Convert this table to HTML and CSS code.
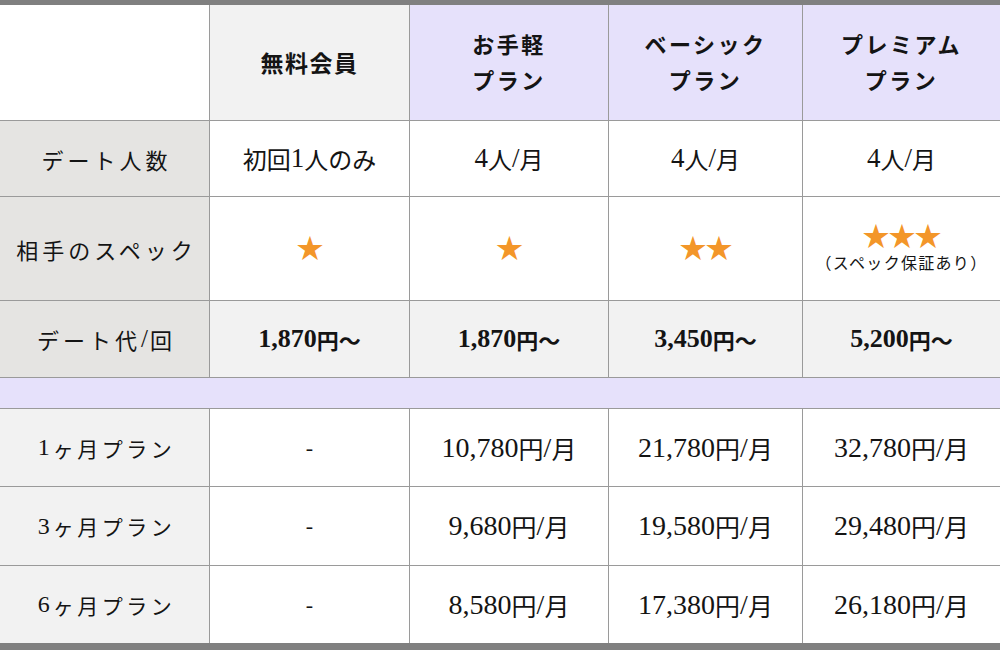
FILE: index.html
```html
<!DOCTYPE html>
<html lang="ja">
<head>
<meta charset="utf-8">
<link rel="stylesheet" href="styles.css">
</head>
<body>
<div class="table">
  <div class="cell corner"></div>
  <div class="cell head free">無料会員</div>
  <div class="cell head plan">お手軽<br>プラン</div>
  <div class="cell head plan">ベーシック<br>プラン</div>
  <div class="cell head plan">プレミアム<br>プラン</div>

  <div class="cell label dark">デート人数</div>
  <div class="cell val cnt">初回<span class="num">1</span>人のみ</div>
  <div class="cell val cnt"><span class="num">4</span>人<span class="num">/</span>月</div>
  <div class="cell val cnt"><span class="num">4</span>人<span class="num">/</span>月</div>
  <div class="cell val cnt"><span class="num">4</span>人<span class="num">/</span>月</div>

  <div class="cell label dark">相手のスペック</div>
  <div class="cell val"><span class="stars">★</span></div>
  <div class="cell val"><span class="stars">★</span></div>
  <div class="cell val"><span class="stars">★★</span></div>
  <div class="cell val col"><span class="stars">★★★</span><span class="note">（スペック保証あり）</span></div>

  <div class="cell label dark">デート代<span class="num">/</span>回</div>
  <div class="cell val grey price"><span class="num">1,870</span>円～</div>
  <div class="cell val grey price"><span class="num">1,870</span>円～</div>
  <div class="cell val grey price"><span class="num">3,450</span>円～</div>
  <div class="cell val grey price"><span class="num">5,200</span>円～</div>

  <div class="spacer"></div>

  <div class="cell label light"><span class="num">1</span>ヶ月プラン</div>
  <div class="cell val dash">-</div>
  <div class="cell val fee"><span class="num">10,780</span>円<span class="num">/</span>月</div>
  <div class="cell val fee"><span class="num">21,780</span>円<span class="num">/</span>月</div>
  <div class="cell val fee"><span class="num">32,780</span>円<span class="num">/</span>月</div>

  <div class="cell label light"><span class="num">3</span>ヶ月プラン</div>
  <div class="cell val dash">-</div>
  <div class="cell val fee"><span class="num">9,680</span>円<span class="num">/</span>月</div>
  <div class="cell val fee"><span class="num">19,580</span>円<span class="num">/</span>月</div>
  <div class="cell val fee"><span class="num">29,480</span>円<span class="num">/</span>月</div>

  <div class="cell label light"><span class="num">6</span>ヶ月プラン</div>
  <div class="cell val dash">-</div>
  <div class="cell val fee"><span class="num">8,580</span>円<span class="num">/</span>月</div>
  <div class="cell val fee"><span class="num">17,380</span>円<span class="num">/</span>月</div>
  <div class="cell val fee"><span class="num">26,180</span>円<span class="num">/</span>月</div>
</div>
</body>
</html>
```

FILE: styles.css
```css
html, body {
  margin: 0;
  padding: 0;
  background: #ffffff;
}

body {
  font-family: "Liberation Serif", "Noto Sans CJK JP", serif;
  color: #141414;
}

.table {
  width: 1000px;
  height: 650px;
  box-sizing: border-box;
  border-top: 5px solid #808080;
  border-bottom: 7px solid #808080;
  background: #9a9a9a;
  display: grid;
  grid-template-columns: 209px 199px 198px 193px 197px;
  grid-template-rows: 115px 75px 103px 76px 30px 77px 78px 77px;
  gap: 1px;
}

.cell {
  display: flex;
  align-items: center;
  justify-content: center;
  text-align: center;
  background: #ffffff;
  font-size: 21px;
  white-space: nowrap;
}

.cell.head {
  display: block;
  align-self: stretch;
  padding-top: 23px;
  box-sizing: border-box;
}

.num {
  font-family: "Liberation Serif", serif;
}

.corner {
  background: #ffffff;
}

.head {
  font-weight: bold;
  font-size: 22px;
  line-height: 36px;
  letter-spacing: 2.5px;
}

.head.free {
  background: #f2f2f2;
  font-size: 23px;
  line-height: 33px;
  letter-spacing: 1.5px;
  padding-top: 43px;
}

.head.plan {
  background: #e6e1fb;
}

.label {
  font-size: 22px;
  letter-spacing: 4px;
  padding-left: 4px;
}

.label .num {
  font-size: 25px;
  letter-spacing: 2px;
}

.label.dark {
  background: #e5e4e2;
}

.label.light {
  background: #f2f2f2;
  font-size: 21px;
  letter-spacing: 3.5px;
}

.label.light .num {
  font-size: 24px;
  letter-spacing: 3px;
}

.val.grey {
  background: #f2f2f2;
}

.cnt {
  font-size: 24px;
}

.cnt .num {
  font-size: 27px;
}

.price {
  font-weight: bold;
  font-size: 22px;
}

.price .num {
  font-size: 26px;
}

.fee {
  font-size: 25px;
}

.fee .num {
  font-size: 28px;
}

.dash {
  font-size: 22px;
}

.col {
  flex-direction: column;
}

.stars {
  color: #f39629;
  font-size: 27px;
  line-height: 30px;
  letter-spacing: -1px;
}

.note {
  font-size: 16px;
  letter-spacing: 1.3px;
  line-height: 24px;
}

.spacer {
  grid-column: 1 / -1;
  background: #e6e1fb;
}
```
